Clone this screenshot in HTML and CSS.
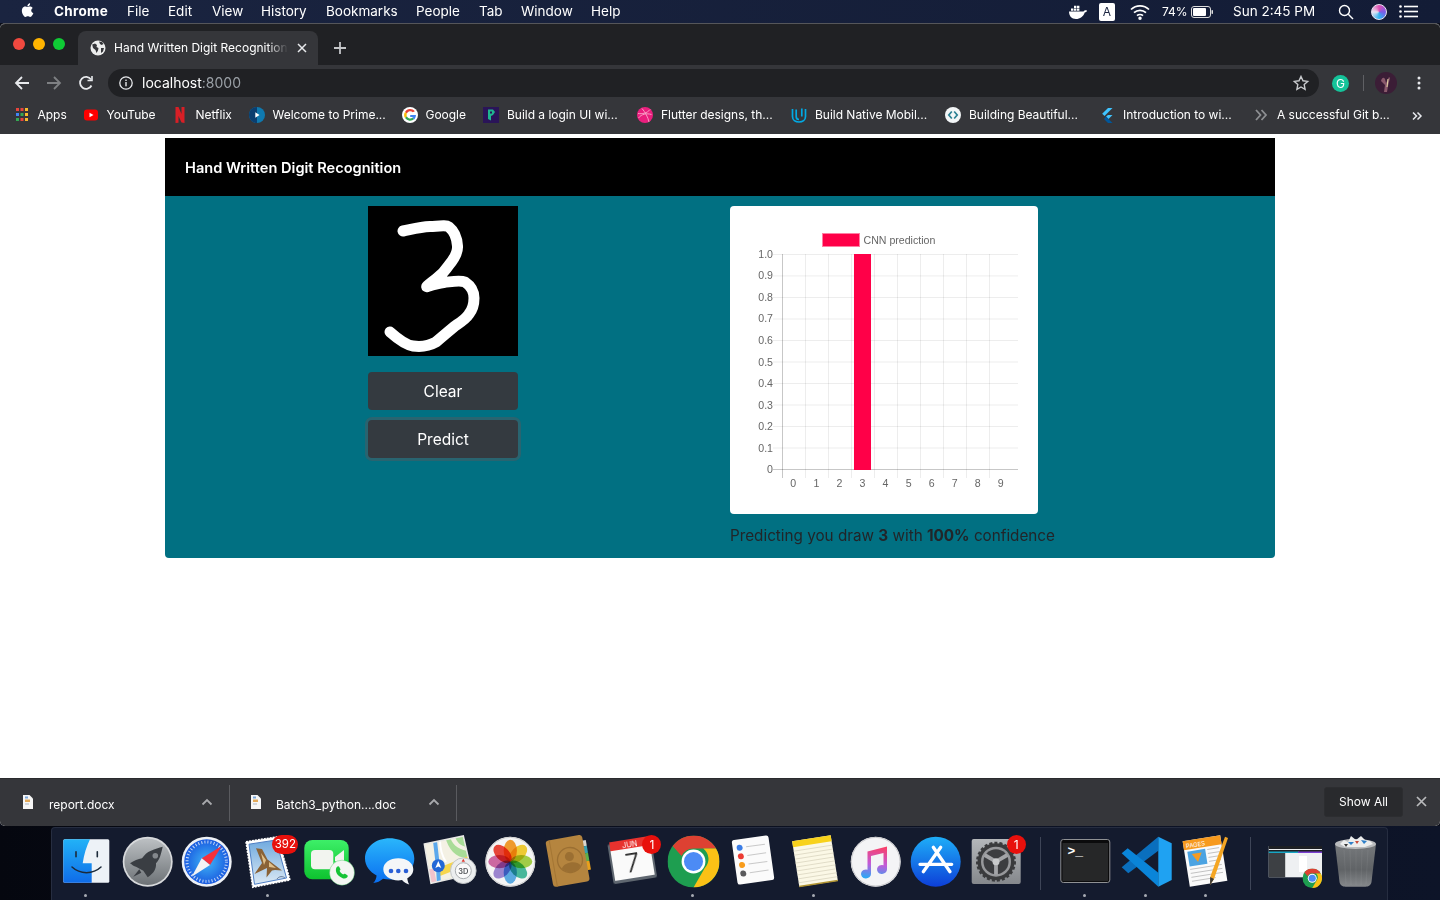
FILE: index.html
```html
<!DOCTYPE html>
<html lang="en">

<head>
    <meta charset="UTF-8">
    <title>Hand Written Digit Recognition</title>
    <link rel="stylesheet" href="styles.css">
</head>

<body>
    <svg class="defs" width="0" height="0">
        <defs>
            <symbol id="chrome" viewBox="0 0 48 48">
                <circle cx="24" cy="24" r="24" fill="#1e9e50"/>
                <path d="M24 0a24 24 0 0 1 20.800 12H24a12 12 0 0 0-11 7L4.700 9.700A24 24 0 0 1 24 0z" fill="#dd4132"/>
                <path d="M44.800 12A24 24 0 0 1 24 48l10.400-18A12 12 0 0 0 33 12z" fill="#fbc116"/>
                <circle cx="24" cy="24" r="11" fill="#fff"/>
                <circle cx="24" cy="24" r="8.800" fill="#4c8bf5"/>
            </symbol>
            <symbol id="doc" viewBox="0 0 11 14">
                <path d="M1 0h6.500L11 3.500V14H1z" fill="#f6f6f6"/>
                <rect x="3" y="1.500" width="3" height="2" fill="#7aa6d8"/>
                <rect x="3" y="4.500" width="5" height="2.500" fill="#e2a95a"/>
                <rect x="3" y="8.500" width="4" height="1" fill="#a9b4c4"/>
            </symbol>
            <symbol id="chevron" viewBox="0 0 12 8">
                <path d="M1.500 6.500 6 2l4.500 4.500" fill="none" stroke="#a8a9ac" stroke-width="1.800"/>
            </symbol>
        </defs>
    </svg>

    <!-- menu bar -->
    <header class="menubar">
        <nav class="menu-left">
            <svg class="apple" width="15" height="17" viewBox="0 0 15 17"><path fill="#fff" d="M11.200 8.500c0-1.700 1.400-2.500 1.500-2.600-.8-1.200-2.100-1.400-2.500-1.400-1.100-.1-2.100.6-2.600.6-.6 0-1.400-.6-2.300-.6-1.200 0-2.300.7-2.900 1.700-1.200 2.100-.3 5.300.9 7 .6.8 1.300 1.800 2.200 1.700.9 0 1.200-.6 2.300-.6s1.400.6 2.300.6c1 0 1.600-.9 2.200-1.700.7-1 1-1.900 1-2-.1 0-2-.8-2.100-2.700zM9.400 3.400c.5-.6.8-1.400.7-2.200-.7 0-1.500.5-2 1.100-.4.500-.8 1.300-.7 2.100.8 0 1.500-.4 2-1z"/></svg>
            <b>Chrome</b>
            <span>File</span>
            <span>Edit</span>
            <span>View</span>
            <span>History</span>
            <span>Bookmarks</span>
            <span>People</span>
            <span>Tab</span>
            <span>Window</span>
            <span>Help</span>
        </nav>
        <div class="menu-right">
            <svg width="20" height="16" viewBox="0 0 20 16"><path fill="#fff" d="M1 7.500h14.500c.8-1.200 2.500-1.500 3.500-.8-.4 1-1.200 1.700-2.300 1.800C15.500 12.500 12 15 8 15 3.500 15 1 12 1 7.500z"/><path fill="#fff" d="M3 4.500h2.400v2.300H3zm3 0h2.400v2.300H6zm3 0h2.400v2.300H9zM6 1.700h2.400V4H6zm3 0h2.400V4H9z"/></svg>
            <span class="input-badge">A</span>
            <svg width="20" height="16" viewBox="0 0 20 16" fill="none" stroke="#fff" stroke-width="1.700"><path d="M1 5.500a13 13 0 0 1 18 0"/><path d="M4 8.700a8.700 8.700 0 0 1 12 0"/><path d="M7 11.700a4.400 4.400 0 0 1 6 0"/><circle cx="10" cy="14.300" r=".9" fill="#fff"/></svg>
            <span class="small">74%</span>
            <svg width="23" height="12" viewBox="0 0 23 12"><rect x=".5" y=".5" width="19" height="11" rx="2.500" fill="none" stroke="#ddd"/><rect x="2" y="2" width="13" height="8" rx="1" fill="#fff"/><rect x="20.500" y="4" width="1.500" height="4" rx=".7" fill="#ddd"/></svg>
            <span>Sun 2:45 PM</span>
            <svg width="16" height="16" viewBox="0 0 16 16" fill="none" stroke="#fff" stroke-width="1.400"><circle cx="6.500" cy="6.500" r="5"/><path d="m10.300 10.300 4.700 4.700"/></svg>
            <span class="siri"></span>
            <svg width="19" height="13" viewBox="0 0 19 13" fill="#fff"><circle cx="1.500" cy="1.500" r="1.300"/><circle cx="1.500" cy="6.500" r="1.300"/><circle cx="1.500" cy="11.500" r="1.300"/><rect x="5" y=".7" width="14" height="1.600"/><rect x="5" y="5.700" width="14" height="1.600"/><rect x="5" y="10.700" width="14" height="1.600"/></svg>
        </div>
    </header>

    <div class="window">
        <!-- tab strip -->
        <div class="tabstrip">
            <div class="lights">
                <i class="light red"></i>
                <i class="light yellow"></i>
                <i class="light green"></i>
            </div>
            <div class="tab">
                <svg width="16" height="16" viewBox="0 0 16 16"><circle cx="8" cy="8" r="7.500" fill="#eceded"/><path fill="#35363a" d="M2.200 4.500 5 3.500l2 1.500-.5 2L8.500 8 8 10.500 6.500 13 5.500 10 3 8zM9 1.500l3 .5 1.500 2-2 1-1.500-1zM11 8h3l-1 3.500-2 1.500z"/></svg>
                <span class="tab-title">Hand Written Digit Recognition</span>
                <svg width="10" height="10" viewBox="0 0 10 10" stroke="#e8eaed" stroke-width="1.500"><path d="m1 1 8 8M9 1 1 9"/></svg>
            </div>
            <svg class="newtab" width="14" height="14" viewBox="0 0 14 14" stroke="#c4c6c9" stroke-width="1.800"><path d="M7 1v12M1 7h12"/></svg>
        </div>

        <!-- toolbar -->
        <div class="toolbar">
            <svg width="16" height="16" viewBox="0 0 16 16" fill="none" stroke="#e8eaed" stroke-width="1.800"><path d="M15 8H2M8 2 2 8l6 6"/></svg>
            <svg width="16" height="16" viewBox="0 0 16 16" fill="none" stroke="#7e8083" stroke-width="1.800"><path d="M1 8h13M8 2l6 6-6 6"/></svg>
            <svg width="16" height="16" viewBox="0 0 16 16" fill="none" stroke="#e8eaed" stroke-width="1.800"><path d="M13.500 10.500A6 6 0 1 1 13 4.500"/><path d="M14 1v4.500H9.500" stroke-width="1.600"/></svg>
            <div class="omnibox">
                <svg width="14" height="14" viewBox="0 0 14 14"><circle cx="7" cy="7" r="6.200" fill="none" stroke="#e8eaed" stroke-width="1.300"/><rect x="6.300" y="6" width="1.400" height="4.300" fill="#e8eaed"/><rect x="6.300" y="3.600" width="1.400" height="1.400" fill="#e8eaed"/></svg>
                <span class="url">localhost<em>:8000</em></span>
                <svg class="star" width="16" height="16" viewBox="0 0 16 16"><path d="m8 1.500 2 4.300 4.700.6-3.500 3.200.9 4.700L8 12l-4.100 2.300.9-4.700L1.300 6.400 6 5.800z" fill="none" stroke="#c9cbce" stroke-width="1.400"/></svg>
            </div>
            <span class="grammarly">G</span>
            <i class="tool-sep"></i>
            <svg class="avatar" width="22" height="22" viewBox="0 0 22 22"><circle cx="11" cy="11" r="11" fill="#3b1d36"/><path d="M6 9c1-4 3-4 4-2l1 4 3-6 1 1-2 8-1 6H9l1-7z" fill="#8a5a6c"/><path d="m13 7-1 8" stroke="#e6d9a8" stroke-width="1"/></svg>
            <svg class="kebab" width="4" height="14" viewBox="0 0 4 14" fill="#e8eaed"><circle cx="2" cy="2" r="1.500"/><circle cx="2" cy="7" r="1.500"/><circle cx="2" cy="12" r="1.500"/></svg>
        </div>

        <!-- bookmarks -->
        <div class="bookmarks">
            <div class="bm">
                <svg width="16" height="16" viewBox="0 0 16 16"><rect x="2" y="1" width="3" height="3" fill="#e8453c"/><rect x="6.500" y="1" width="3" height="3" fill="#e8453c"/><rect x="11" y="1" width="3" height="3" fill="#f9bb2d"/><rect x="2" y="6" width="3" height="3" fill="#4285f4"/><rect x="6.500" y="6" width="3" height="3" fill="#34a853"/><rect x="11" y="6" width="3" height="3" fill="#f9bb2d"/><rect x="2" y="11" width="3" height="3" fill="#34a853"/><rect x="6.500" y="11" width="3" height="3" fill="#e8453c"/><rect x="11" y="11" width="3" height="3" fill="#f9bb2d"/></svg>
                <span>Apps</span>
            </div>
            <div class="bm">
                <svg width="16" height="16" viewBox="0 0 16 16"><rect x="1" y="2.500" width="14" height="11" rx="3" fill="#f00"/><path d="M6.500 5.700v4.600L10.500 8z" fill="#fff"/></svg>
                <span>YouTube</span>
            </div>
            <div class="bm">
                <svg width="16" height="16" viewBox="0 0 16 16"><path d="M3.500 0h3l3 7V0h3v16l-3-.5-3-6.500v6.800l-3 .2z" fill="#d81f26"/></svg>
                <span>Netflix</span>
            </div>
            <div class="bm">
                <svg width="16" height="16" viewBox="0 0 16 16"><circle cx="8" cy="8" r="8" fill="#0f79af"/><path d="M0 8a8 8 0 0 1 8-8v16a8 8 0 0 1-8-8z" fill="#0b3e6f"/><path d="M6.300 5.300v5.400L10.500 8z" fill="#fff"/></svg>
                <span>Welcome to Prime...</span>
            </div>
            <div class="bm">
                <svg width="16" height="16" viewBox="0 0 16 16"><circle cx="8" cy="8" r="8" fill="#fff"/><path d="M12.900 4.300A6 6 0 0 0 3 4.900l1.900 1.500a3.700 3.700 0 0 1 5.900-1.200z" fill="#ea4335"/><path d="M3 4.900a6 6 0 0 0 0 6.200l1.900-1.500a3.700 3.700 0 0 1 0-3.200z" fill="#fbbc05"/><path d="M3 11.100a6 6 0 0 0 9.300.9l-1.800-1.400a3.700 3.700 0 0 1-5.600-1z" fill="#34a853"/><path d="M14 8h-5.800v2h3.200a3 3 0 0 1-.9 1l1.800 1.400A6 6 0 0 0 14 8z" fill="#4285f4"/></svg>
                <span>Google</span>
            </div>
            <div class="bm">
                <svg width="16" height="16" viewBox="0 0 16 16"><rect width="16" height="16" fill="#2a1458"/><path d="M5 2.500h5l2 2.500-2 3-2 1v4.500l-3-1.500z" fill="#1fb58f"/><path d="M7 4.500h2v2H7z" fill="#2a1458"/></svg>
                <span>Build a login UI wi...</span>
            </div>
            <div class="bm">
                <svg width="16" height="16" viewBox="0 0 16 16"><circle cx="8" cy="8" r="8" fill="#ea1f7e"/><path d="M5 1.500C8 5 11 10 12 15M1 6.500c4 .5 9 0 12-4M1.500 11c3-4 8-5 13-3.500" fill="none" stroke="#f9a9cc" stroke-width=".9"/></svg>
                <span>Flutter designs, th...</span>
            </div>
            <div class="bm">
                <svg width="16" height="16" viewBox="0 0 16 16" fill="none" stroke="#02a9e3" stroke-width="1.700"><path d="M1.500 2v7.500c0 3.500 3 5.500 6.500 5.500s6.500-2 6.500-5.500V2"/><path d="M5.200 2.500v7c0 2 1.200 3 2.800 3m2.800-11v8"/></svg>
                <span>Build Native Mobil...</span>
            </div>
            <div class="bm">
                <svg width="16" height="16" viewBox="0 0 16 16"><circle cx="8" cy="8" r="8" fill="#f3f6f7"/><path d="M6.800 4.500 3.800 8l3 3.500" fill="none" stroke="#2a7f92" stroke-width="1.700"/><path d="M9.200 4.500l3 3.500-3 3.500" fill="none" stroke="#2a7f92" stroke-width="1.700"/></svg>
                <span>Building Beautiful...</span>
            </div>
            <div class="bm">
                <svg width="16" height="16" viewBox="0 0 16 16"><path d="M9 1h4.500L5.500 9 3.200 6.800z" fill="#40c4ff"/><path d="M9 8h4.500l-4 4L7 9.500z" fill="#40c4ff"/><path d="m7 9.500 2.500 2.500L13.500 16H9l-4-4z" fill="#01579b"/></svg>
                <span>Introduction to wi...</span>
            </div>
            <div class="bm">
                <svg width="16" height="16" viewBox="0 0 16 16" fill="none" stroke="#8d8f92" stroke-width="1.800"><path d="m3 3 4.500 5L3 13M8.500 3 13 8l-4.500 5"/></svg>
                <span>A successful Git b...</span>
            </div>
            <svg class="bm-more" width="10" height="10" viewBox="0 0 10 10" fill="none" stroke="#e8eaed" stroke-width="1.500"><path d="m1 1.500 3.500 3.500L1 8.500M5.500 1.500 9 5 5.500 8.500"/></svg>
        </div>

        <!-- page -->
        <main class="page">
            <div class="container">
                <div class="navbar">Hand Written Digit Recognition</div>
                <section class="panel">
                    <div class="draw-col">
                        <svg class="digit-canvas" width="150" height="150" viewBox="0 0 150 150">
                            <path d="M35 25C45 23 52 21 62 20.500S78 19 81 21C86 25 89 32 89.500 40C90 47 86 53 81 59C77 65 72 70 68 73C64 76 60 79 58.700 80.700C64 79 70 77 76 76.500C85 75.500 92 74 97 76C103 80 106 86 106 92C106 98 105 103 101 108C98 113 93 116 87 120C81 125 75 130 68 136C61 140 52 141 45 140C38 139 31 134 22 126" fill="none" stroke="#fff" stroke-width="11" stroke-linecap="round" stroke-linejoin="round"/>
                        </svg>
                        <button class="btn">Clear</button>
                        <button class="btn btn-focus">Predict</button>
                    </div>
                    <div class="chart-col">
                        <div class="chart-card">
                            <svg width="308" height="308" viewBox="0 0 308 308" class="chart">
                                <g stroke="#000" stroke-opacity=".07" stroke-width="1">
                                    <path d="M43 48.500H288M43 69.900H288M43 91.500H288M43 113H288M43 134.500H288M43 156H288M43 177.500H288M43 199H288M43 220.500H288M43 242H288"/>
                                    <path d="M75.500 48V272M98.500 48V272M121.500 48V272M144.500 48V272M167.500 48V272M190.500 48V272M213.500 48V272M236.500 48V272M259.500 48V272"/>
                                </g>
                                <path d="M43 263.500H288M52.500 48V272" stroke="#000" stroke-opacity=".22" fill="none"/>
                                <rect x="124" y="48" width="17" height="216" fill="#ff0048"/>
                                <rect x="92.500" y="27.500" width="37" height="13" fill="#ff0048" stroke="#ff7fa3"/>
                                <text x="133.500" y="37.500">CNN prediction</text>
                                <g text-anchor="end">
                                    <text x="43" y="51.500">1.0</text>
                                    <text x="43" y="73">0.9</text>
                                    <text x="43" y="95">0.8</text>
                                    <text x="43" y="116">0.7</text>
                                    <text x="43" y="137.500">0.6</text>
                                    <text x="43" y="159.500">0.5</text>
                                    <text x="43" y="181">0.4</text>
                                    <text x="43" y="202.500">0.3</text>
                                    <text x="43" y="224">0.2</text>
                                    <text x="43" y="245.500">0.1</text>
                                    <text x="43" y="267">0</text>
                                </g>
                                <g text-anchor="middle">
                                    <text x="63.300" y="280.500">0</text>
                                    <text x="86.400" y="280.500">1</text>
                                    <text x="109.400" y="280.500">2</text>
                                    <text x="132.500" y="280.500">3</text>
                                    <text x="155.500" y="280.500">4</text>
                                    <text x="178.600" y="280.500">5</text>
                                    <text x="201.700" y="280.500">6</text>
                                    <text x="224.700" y="280.500">7</text>
                                    <text x="247.800" y="280.500">8</text>
                                    <text x="270.800" y="280.500">9</text>
                                </g>
                            </svg>
                        </div>
                        <p class="result">Predicting you draw <b>3</b> with <b>100%</b> confidence</p>
                    </div>
                </section>
            </div>
        </main>

        <!-- downloads -->
        <footer class="downloads">
            <div class="dl dl-first">
                <svg width="11" height="14"><use href="#doc"/></svg>
                <span>report.docx</span>
                <svg class="dl-chevron" width="12" height="8"><use href="#chevron"/></svg>
            </div>
            <div class="dl dl-second">
                <svg width="11" height="14"><use href="#doc"/></svg>
                <span>Batch3_python....doc</span>
                <svg class="dl-chevron" width="12" height="8"><use href="#chevron"/></svg>
            </div>
            <button class="show-all">Show All</button>
            <svg class="dl-close" width="11" height="11" viewBox="0 0 11 11" stroke="#b9babc" stroke-width="1.700"><path d="m1 1 9 9M10 1l-9 9"/></svg>
        </footer>
    </div>

    <!-- dock -->
    <div class="desktop">
        <div class="dock">
            <!-- finder -->
            <div class="dock-item running">
                <svg width="54" height="54" viewBox="0 0 54 54"><defs><linearGradient id="fa" x1="0" y1="0" x2="0" y2="1"><stop offset="0" stop-color="#22b2f7"/><stop offset="1" stop-color="#0f6ce8"/></linearGradient></defs><rect x="4.300" y="3.300" width="46" height="43.400" rx="1.500" fill="#edf2f7"/><path d="M5.800 3.300H31c-3.500 7-6 15-7.300 24h9V46.700H5.800a1.500 1.500 0 0 1-1.500-1.500V4.800a1.500 1.500 0 0 1 1.500-1.500z" fill="url(#fa)"/><path d="M17 15.700v5M38.300 15.700v5" stroke="#1c2a3a" stroke-width="1.600" stroke-linecap="round"/><path d="M13 31c8 7.500 21 7.500 29 0" fill="none" stroke="#1c2a3a" stroke-width="1.500" stroke-linecap="round"/></svg>
            </div>
            <!-- launchpad -->
            <div class="dock-item">
                <svg width="54" height="54" viewBox="0 0 54 54"><defs><linearGradient id="la" x1="0" y1="0" x2="0" y2="1"><stop offset="0" stop-color="#bcc0c3"/><stop offset="1" stop-color="#6d7276"/></linearGradient></defs><circle cx="27.700" cy="25.700" r="25" fill="#d7d9db"/><circle cx="27.700" cy="25.700" r="23.300" fill="url(#la)"/><path d="M42.700 10.700C41 18 40 23 36 27.300c.5 5-2 10-8.300 14l-4.400-6.600L16 30.700c-2-.2-4-2-6-3.400 4-2.500 8-4.500 12-5 2.500-3.500 5-6 9-7.600 4-1.700 8-3.300 11.700-4z" fill="#3a3e43"/><circle cx="35.300" cy="19.700" r="2.800" fill="#84888c"/><path d="M19.300 33.300 13.300 40.700l8-4z" fill="#3a3e43"/></svg>
            </div>
            <!-- safari -->
            <div class="dock-item">
                <svg width="54" height="54" viewBox="0 0 54 54"><defs><radialGradient id="sa"><stop offset="0" stop-color="#3fb5f6"/><stop offset="1" stop-color="#1a5be0"/></radialGradient></defs><circle cx="26.700" cy="25.700" r="25" fill="#eef1f5"/><circle cx="26.700" cy="25.700" r="22.500" fill="url(#sa)"/><circle cx="26.700" cy="25.700" r="19.700" fill="none" stroke="#fff" stroke-opacity=".75" stroke-width="3" stroke-dasharray="1 2.100"/><path d="M41.700 10 21.700 22.300 30 29z" fill="#f5303c"/><path d="M11.700 40.700 30 29l-8.300-6.700z" fill="#f4f4f4"/></svg>
            </div>
            <!-- mail -->
            <div class="dock-item running">
                <svg width="54" height="54" viewBox="0 0 54 54"><defs><linearGradient id="ml" x1="0" y1="0" x2="0" y2="1"><stop offset="0" stop-color="#6fa9de"/><stop offset="1" stop-color="#dbe9f5"/></linearGradient></defs><path d="M5 5.700 36.700.7 49 44 11.700 51.300z" fill="#fff" stroke="#fff" stroke-width="1.500" stroke-dasharray="2 1"/><path d="M8 8.200 35 4 45.500 42 13.500 48.300z" fill="url(#ml)" stroke="#4f7fc4" stroke-width="1"/><path d="M15 12.300 21 13l5.500 10.500L41 34.500l-7-.5-3 .5-5.500 7 .5-9.500-12.500 6L21 27z" fill="#8a6236"/><path d="M20 17l5 7-2 5zM28 26l7 6-7-1z" fill="#e0c08a"/><path d="M36 43c2-3 6-3 8-1" fill="none" stroke="#6b7f9e" stroke-width="1"/></svg>
                <span class="badge badge-wide">392</span>
            </div>
            <!-- facetime -->
            <div class="dock-item">
                <svg width="54" height="54" viewBox="0 0 54 54"><defs><linearGradient id="fc" x1="0" y1="0" x2="0" y2="1"><stop offset="0" stop-color="#3def68"/><stop offset="1" stop-color="#0ec32f"/></linearGradient></defs><rect x="2.300" y="4" width="44.400" height="39.300" rx="8" fill="url(#fc)"/><rect x="9" y="14" width="22.300" height="19.300" rx="4" fill="#f2f4ef"/><path d="M33 21l9-7v18l-9-7z" fill="#f2f4ef"/><circle cx="40" cy="36.700" r="12.500" fill="#f4f6f3" stroke="#0db52f" stroke-opacity=".3"/><path d="M34.800 31c1-1 2-1 2.500 0l1 2c.3.700 0 1.200-.7 1.800.7 1.700 2 3 3.600 3.700.6-.7 1.200-1 1.800-.7l2 1.200c1 .5 1 1.500 0 2.500-2 2-5 1-8-1.500s-4-6.500-2.200-9z" fill="#16c436"/></svg>
            </div>
            <!-- messages -->
            <div class="dock-item">
                <svg width="54" height="54" viewBox="0 0 54 54"><defs><linearGradient id="ms" x1="0" y1="0" x2="0" y2="1"><stop offset="0" stop-color="#2ab6fb"/><stop offset="1" stop-color="#0a6ef0"/></linearGradient></defs><path d="M27.700 2.300C41.500 2.300 52.300 11 52.300 22.500S41.500 43.500 27.700 43.500c-2.500 0-4.700-.3-6.700-.8-2.500 2.300-6 4-9.700 4.300 1.800-2 3-4.500 3.300-7.500C8 36 3 30 3 22.500 3 11 14 2.300 27.700 2.300z" fill="url(#ms)"/><path d="M36.300 22.300c8.300 0 15 4.600 15 11 0 4.300-2.500 7-6 9 .2 2 .6 4 2 6.300-3-.8-5.500-2.300-7.300-4.500-1.200.3-2.400.4-3.700.4-8.300 0-15-4.800-15-11.200s6.700-11 15-11z" fill="#f4f6f8"/><circle cx="29" cy="35" r="2.300" fill="#2a5fd6"/><circle cx="36.300" cy="35" r="2.300" fill="#2a5fd6"/><circle cx="44" cy="35" r="2.300" fill="#2a5fd6"/></svg>
            </div>
            <!-- maps -->
            <div class="dock-item">
                <svg width="54" height="54" viewBox="0 0 54 54"><defs><clipPath id="mp"><path d="M1.300 8 40.300 0 49 38 8 47.300z"/></clipPath></defs><path d="M1.300 8 40.300 0 49 38 8 47.300z" fill="#f4f1e4"/><g clip-path="url(#mp)"><path d="M22 0h22v22C33 22 25 13 22 0z" fill="#a9dc98"/><path d="M27 0c1 7 7 13 17 15v-4c-6-1-11-5-12-11z" fill="#f4f1e4"/><path d="M1 33h10l3 16H6z" fill="#f2c3cc"/><path d="M17 40 50 27v-9L15 32z" fill="#f7d64c"/><path d="M12 5l3 26 1 18" stroke="#5aa8ec" stroke-width="4" fill="none"/><path d="M17 4c0 8 2 16 6 22" stroke="#fff" stroke-width="2" fill="none"/></g><path d="M1.300 8 40.300 0 49 38 8 47.300z" fill="none" stroke="#e9e9e6" stroke-width="1.500"/><circle cx="15.300" cy="29.700" r="6.500" fill="#2468d6"/><path d="m15.300 25 3 7-3-1.500-3 1.500z" fill="#fff"/><circle cx="40.300" cy="34.700" r="12.800" fill="#eceeef" stroke="#c3c6c8"/><circle cx="40.300" cy="34.700" r="8" fill="#fafafa" stroke="#a8acaf"/><path d="m40.300 22.800 1.700 3h-3.400z" fill="#e03a30"/><text class="maps-3d" x="40.300" y="37.500" text-anchor="middle">3D</text></svg>
            </div>
            <!-- photos -->
            <div class="dock-item">
                <svg width="54" height="54" viewBox="0 0 54 54"><circle cx="26.300" cy="25.700" r="25" fill="#f5f5f5"/><circle cx="26.300" cy="25.700" r="24.300" fill="none" stroke="#cfcfcf"/><g class="petals" transform="translate(26.300 25.700)"><ellipse cy="-11" rx="6.600" ry="11" fill="#f9a02e"/><ellipse cy="-11" rx="6.600" ry="11" fill="#f7d136" transform="rotate(45)"/><ellipse cy="-11" rx="6.600" ry="11" fill="#a8d54a" transform="rotate(90)"/><ellipse cy="-11" rx="6.600" ry="11" fill="#4bbfa0" transform="rotate(135)"/><ellipse cy="-11" rx="6.600" ry="11" fill="#5fb0ea" transform="rotate(180)"/><ellipse cy="-11" rx="6.600" ry="11" fill="#a28ad8" transform="rotate(225)"/><ellipse cy="-11" rx="6.600" ry="11" fill="#d56ca8" transform="rotate(270)"/><ellipse cy="-11" rx="6.600" ry="11" fill="#f0483a" transform="rotate(315)"/></g></svg>
            </div>
            <!-- contacts -->
            <div class="dock-item">
                <svg width="54" height="54" viewBox="0 0 54 54"><g transform="rotate(-10 26 24)"><rect x="41" y="7" width="4" height="6" fill="#d8d6cf"/><rect x="41" y="13" width="4" height="7" fill="#38a0b0"/><rect x="41" y="20" width="4" height="8" fill="#5fb04a"/><rect x="41" y="28" width="4" height="9" fill="#e8a01c"/><rect x="5" y="1" width="37" height="47" rx="3" fill="#b5853f"/><path d="M9 1v47" stroke="#a47634"/><circle cx="26" cy="24" r="12.500" fill="none" stroke="#9b6f32" stroke-width="1.300"/><circle cx="26" cy="20.500" r="4.500" fill="#9b6f32"/><path d="M16.500 31c3-6 16-6 19 0-4 7-15 7-19 0z" fill="#9b6f32"/></g></svg>
            </div>
            <!-- calendar -->
            <div class="dock-item">
                <svg width="54" height="54" viewBox="0 0 54 54"><g transform="rotate(-9 27 23)"><rect x="5" y="5" width="44" height="40" rx="2" fill="#5f6770"/><rect x="7" y="3" width="40" height="39" fill="#fafafa"/><rect x="7" y="3" width="40" height="9" fill="#e8322e"/><text class="cal-month" x="27" y="10.800" text-anchor="middle">JUN</text><text class="cal-day" x="27" y="36" text-anchor="middle">7</text></g></svg>
                <span class="badge">1</span>
            </div>
            <!-- chrome -->
            <div class="dock-item running">
                <svg width="54" height="54"><use href="#chrome" x="1.500" y="-.5" width="52" height="52"/></svg>
            </div>
            <!-- reminders -->
            <div class="dock-item">
                <svg width="54" height="54" viewBox="0 0 54 54"><g transform="rotate(-8 27 24)"><rect x="8.500" y="1.500" width="37" height="45" rx="2.500" fill="#fbfbfb"/><circle cx="15.500" cy="10" r="3" fill="#3b7de6"/><circle cx="15.500" cy="18.700" r="3" fill="#ec3b33"/><circle cx="15.500" cy="27.400" r="3" fill="#f89c1c"/><circle cx="15.500" cy="36.100" r="3" fill="#5a5a5c"/><path d="M22 10h19M22 18.700h19M22 27.400h19M22 36.100h19" stroke="#c9c9c9" stroke-width="1"/></g></svg>
            </div>
            <!-- notes -->
            <div class="dock-item running">
                <svg width="54" height="54" viewBox="0 0 54 54"><g transform="rotate(-9 28 25)"><rect x="8.500" y="2" width="39" height="46" fill="#fbf8e6"/><rect x="8.500" y="2" width="39" height="6" fill="#f8d21c"/><path d="M8.500 12h39M8.500 16h39M8.500 20h39M8.500 24h39M8.500 28h39M8.500 32h39M8.500 36h39M8.500 40h39M8.500 44h39" stroke="#dcd7c2" stroke-width=".8"/><rect x="8.500" y="47" width="39" height="1.500" fill="#b09330"/></g></svg>
            </div>
            <!-- music -->
            <div class="dock-item">
                <svg width="54" height="54" viewBox="0 0 54 54"><defs><linearGradient id="mu" x1=".6" y1="0" x2=".5" y2="1"><stop offset="0" stop-color="#f9406a"/><stop offset=".55" stop-color="#c25ad8"/><stop offset="1" stop-color="#2ea7f5"/></linearGradient></defs><circle cx="27.700" cy="25.700" r="25" fill="#f4f4f6"/><circle cx="27.700" cy="25.700" r="24.300" fill="none" stroke="#c9c9cc"/><path d="M19.500 15.500 39 10.500v23a5 4.500 0 1 1-3.500-4.300V17l-12.500 3v18a5 4.500 0 1 1-3.500-4.300z" fill="url(#mu)"/></svg>
            </div>
            <!-- app store -->
            <div class="dock-item">
                <svg width="54" height="54" viewBox="0 0 54 54"><defs><linearGradient id="as" x1="0" y1="0" x2="0" y2="1"><stop offset="0" stop-color="#1eaef8"/><stop offset="1" stop-color="#0d3fd8"/></linearGradient></defs><circle cx="26.700" cy="25.700" r="25" fill="url(#as)"/><path d="M24.300 11.300 41 35.700M31.700 11.300 14.300 35.700M11 28.300h31.700" fill="none" stroke="#fff" stroke-width="3.300" stroke-linecap="round"/></svg>
            </div>
            <!-- system preferences -->
            <div class="dock-item">
                <svg width="54" height="54" viewBox="0 0 54 54"><defs><linearGradient id="sp" x1="0" y1="0" x2="0" y2="1"><stop offset="0" stop-color="#b4b7ba"/><stop offset="1" stop-color="#85888c"/></linearGradient></defs><rect x="2.700" y="3" width="49" height="45" rx="2" fill="url(#sp)"/><circle cx="27" cy="25.700" r="18.500" fill="#3a3b3d" stroke="#3a3b3d" stroke-width="3" stroke-dasharray="3 2"/><circle cx="27" cy="25.700" r="15" fill="#97989b"/><circle cx="27" cy="25.700" r="12.500" fill="#3c3d40"/><path d="M27 25.700v13M27 25.700 15.700 19M27 25.700 38.300 19" stroke="#a3a4a7" stroke-width="3.800"/><circle cx="27" cy="25.700" r="3.500" fill="#c9cacc"/></svg>
                <span class="badge">1</span>
            </div>
            <div class="dock-sep"></div>
            <!-- terminal -->
            <div class="dock-item running">
                <svg width="54" height="54" viewBox="0 0 54 54"><rect x="2.800" y="3.500" width="49" height="43" rx="2.500" fill="#0b0b0c" stroke="#8f9194"/><rect x="4.500" y="7" width="45.500" height="38" fill="#262728"/><text class="term" x="9.500" y="18.500">&gt;_</text></svg>
            </div>
            <!-- vs code -->
            <div class="dock-item running">
                <svg width="54" height="54" viewBox="0 0 54 54"><path d="M39.300.7 39.300 14.700 9.300 37.300 2.700 31.300z" fill="#0a6fbe"/><path d="M2.700 17.300 8.700 12.300 39.300 36.700V50.700z" fill="#0a85d9"/><path d="M39.300.7 52.700 7.300V44L39.300 50.700z" fill="#1fa2f2"/></svg>
            </div>
            <!-- pages -->
            <div class="dock-item running">
                <svg width="54" height="54" viewBox="0 0 54 54"><g transform="rotate(-9 26 25)"><rect x="7" y="2" width="38" height="46" fill="#fafafa"/><rect x="7" y="2" width="38" height="9" fill="#f79a1e"/><text class="pages-label" x="9.500" y="9.500">PAGES</text><rect x="10" y="13" width="18" height="15" fill="#4ba3e2"/><path d="M14 16h10l-5 9z" fill="#f59b23"/><path d="M30 14h12M30 18h12M30 22h12M30 26h12M10 31h32M10 35h32M10 39h32M10 43h24" stroke="#b9b9b9" stroke-width=".8"/></g><path d="M46 .7 49 2 35 43l-4 6 .2-8z" fill="#f5a623"/><path d="M35 43l-4 6 .2-8z" fill="#3a3a3a"/></svg>
            </div>
            <div class="dock-sep"></div>
            <!-- screenshot window -->
            <div class="dock-item">
                <svg width="54" height="54" viewBox="0 0 54 54"><rect x=".7" y="10" width="53.300" height="31.300" fill="#eef0f2"/><rect x=".7" y="10" width="53.300" height="3" fill="#1d1f23"/><rect x=".7" y="14" width="53.300" height="3" fill="#1d1f23"/><rect x=".7" y="15.500" width="30" height="1.500" fill="#18a5c4"/><rect x="30" y="15.500" width="24" height="1.500" fill="#7a3fd0"/><rect x=".7" y="17" width="16.500" height="24.300" fill="#3d4044"/><rect x="31" y="20" width="8" height="16" fill="#fff"/><svg x="34.500" y="32.500" width="19.500" height="19.500"><use href="#chrome" width="19.500" height="19.500"/></svg></svg>
            </div>
            <!-- trash -->
            <div class="dock-item">
                <svg width="54" height="54" viewBox="0 0 54 54"><defs><linearGradient id="tr" x1="0" y1="0" x2="0" y2="1"><stop offset="0" stop-color="#76797c"/><stop offset=".6" stop-color="#606366"/><stop offset="1" stop-color="#85888b"/></linearGradient></defs><path d="M6 8h41l-4.500 38c-.4 3-3 4.700-6 4.700h-20c-3 0-5.600-1.700-6-4.700z" fill="url(#tr)"/><path d="M15 14l2 34M21 14l1 35M27 14v35M33 14l-1 35M39 14l-2 34" stroke="#fff" stroke-opacity=".06"/><ellipse cx="26.500" cy="8" rx="20.500" ry="5" fill="#b9bbbd"/><path d="M11 8l4-4 4 2 3-6 5 4 5-4 4 4 5 1 3 3-8 3H16z" fill="#eceded"/><path d="M19 6l3 3 3-3zM32 4l3 4 3-3z" fill="#2f7fc8"/><path d="M26 5l2 3 2-3z" fill="#c84a3a"/><path d="M15 8l2 3 2-3z" fill="#3a3a3a"/></svg>
            </div>
        </div>
    </div>
</body>

</html>
```

FILE: styles.css
```css
* {
    box-sizing: border-box;
}

html,
body {
    margin: 0;
    height: 900px;
    overflow: hidden;
}

body {
    display: flex;
    flex-direction: column;
    background: #0a0d18;
    font-family: Inter, "Liberation Sans", sans-serif;
}

.defs {
    position: absolute;
}

svg {
    display: block;
    flex: none;
    overflow: visible;
}

/* menu bar */
.menubar {
    display: flex;
    justify-content: space-between;
    height: 23px;
    padding: 0 20px;
    background: linear-gradient(90deg, #1a2440, #131c36);
    color: #fff;
    font-size: 13.5px;
    line-height: 23px;
}

.menu-left {
    display: grid;
    grid-template-columns: 34px 73px 41px 44px 49px 65px 90px 63px 42px 70px 40px;
    align-items: center;
}

.menu-left b {
    font-weight: 700;
    letter-spacing: .3px;
}

.apple {
    margin-top: -3px;
}

.menu-right {
    display: grid;
    grid-template-columns: 31px 31px 32px 29px 42px 105px 33px 28px 21px;
    align-items: center;
}

.menu-right .small {
    font-size: 12px;
}

.input-badge {
    width: 16px;
    height: 18px;
    border-radius: 2px;
    background: #fff;
    color: #1a2440;
    font-size: 12px;
    line-height: 18px;
    text-align: center;
}

.siri {
    width: 16px;
    height: 16px;
    border-radius: 50%;
    background: conic-gradient(#e04fb0, #7a5be8, #2fb4f0, #e9e4f2, #e04fb0);
    border: 1px solid #e9e4f2;
}

/* browser window */
.window {
    display: flex;
    flex-direction: column;
    height: 803px;
    border-top: 1px solid #55565a;
    border-radius: 5px;
    background: #fff;
    overflow: hidden;
    color: #fff;
}

.tabstrip {
    display: flex;
    align-items: flex-end;
    flex: none;
    height: 41px;
    background: #202124;
}

.lights {
    display: flex;
    gap: 8px;
    align-self: flex-start;
    margin: 14px 0 0 13px;
    width: 65px;
}

.light {
    width: 12px;
    height: 12px;
    border-radius: 50%;
}

.red {
    background: #f0493f;
}

.yellow {
    background: #ffb400;
}

.green {
    background: #0fcb35;
}

.tab {
    display: flex;
    align-items: center;
    width: 240px;
    height: 34px;
    padding: 0 11px 0 12px;
    background: #35363a;
    border-radius: 8px 8px 0 0;
}

.tab-title {
    width: 175px;
    margin: -1px 9px 0 8px;
    overflow: hidden;
    font-size: 12px;
    line-height: 16px;
    white-space: nowrap;
    -webkit-mask-image: linear-gradient(90deg, #000 88%, transparent);
}

.newtab {
    margin: 0 0 10px 15px;
}

.toolbar {
    display: flex;
    align-items: center;
    flex: none;
    height: 32px;
    padding: 4px 0 0 14px;
    background: #35363a;
}

.toolbar > svg:nth-child(2),
.toolbar > svg:nth-child(3) {
    margin-left: 16px;
}

.omnibox {
    display: flex;
    align-items: center;
    width: 1211px;
    height: 28px;
    margin-left: 14px;
    padding: 0 10px 0 11px;
    background: #202124;
    border-radius: 14px;
}

.url {
    margin: -2px 0 0 9px;
    font-size: 14px;
}

.url em {
    color: #9aa0a6;
    font-style: normal;
}

.star {
    margin-left: auto;
}

.grammarly {
    width: 17px;
    height: 17px;
    margin-left: 13px;
    border-radius: 50%;
    background: #15c39a;
    font-size: 12px;
    line-height: 17px;
    text-align: center;
}

.tool-sep {
    width: 1px;
    height: 16px;
    margin-left: 14px;
    background: #5f6064;
}

.avatar {
    margin-left: 11px;
}

.kebab {
    margin-left: 20px;
}

.bookmarks {
    display: grid;
    grid-template-columns: 69px 89px 77px 153px 81.5px 154px 154px 154px 154px 154px 159px 12px;
    align-items: center;
    flex: none;
    height: 37px;
    padding-left: 13.5px;
    background: #35363a;
    font-size: 12px;
}

.bm {
    display: flex;
    align-items: center;
    gap: 8px;
    margin-top: -1px;
    white-space: nowrap;
}

.bm span {
    margin-top: -1px;
    letter-spacing: -.02px;
}

/* page */
.page {
    flex: 1;
    background: #fff;
}

.container {
    width: 1110px;
    margin: 4px auto 0;
}

.navbar {
    height: 58px;
    padding-left: 20px;
    background: #000;
    color: #fff;
    font-size: 14.6px;
    font-weight: 600;
    line-height: 60px;
}

.panel {
    display: grid;
    grid-template-columns: 565px 1fr;
    padding: 10px 0;
    background: #017082;
    border-radius: 0 0 4px 4px;
}

.draw-col {
    display: flex;
    flex-direction: column;
    gap: 10px;
    padding-left: 203px;
    width: 353px;
}

.digit-canvas {
    margin-bottom: 6px;
    background: #000;
}

.btn {
    height: 38px;
    border: 0;
    border-radius: 4px;
    background: #343a40;
    color: #fff;
    font-family: inherit;
    font-size: 15.5px;
}

.btn-focus {
    box-shadow: 0 0 0 3px rgba(82, 88, 93, .5);
}

.chart-card {
    width: 308px;
    height: 308px;
    background: #fff;
    border-radius: 4px;
}

.chart text {
    fill: #666;
    font-family: "Liberation Sans", sans-serif;
    font-size: 10.6px;
}

.result {
    margin: 10px 0 0;
    color: #212529;
    font-size: 15.25px;
    line-height: 24px;
    white-space: nowrap;
}

/* downloads */
.downloads {
    display: flex;
    align-items: center;
    flex: none;
    height: 48px;
    background: #35363a;
    border-top: 1px solid #2a2b2e;
    font-size: 12px;
}

.dl {
    display: flex;
    align-items: center;
    height: 36px;
    border-right: 1px solid #5a5b5f;
}

.dl > svg {
    margin-top: -2px;
}

.dl span {
    margin: 4px 0 0 16px;
}

.dl-first {
    width: 230px;
    padding-left: 22px;
}

.dl-second {
    width: 227px;
    padding-left: 20px;
}

.dl-second span {
    margin-left: 15px;
}

.dl-chevron {
    margin-left: auto;
    margin-right: 16px;
}

.show-all {
    width: 79px;
    height: 30px;
    margin: -2px 0 0 auto;
    border: 1px solid #2c2d30;
    border-radius: 3px;
    background: #292a2d;
    color: #fff;
    font-family: inherit;
    font-size: 12px;
}

.dl-close {
    margin: -2px 13px 0 13px;
}

/* dock */
.desktop {
    flex: 1;
    padding: 1px 0 0 51.4px;
    background: linear-gradient(90deg, #05070f, #0b1020 50%, #0d1428);
}

.dock {
    display: flex;
    width: 1337px;
    height: 73px;
    padding-left: 3.2px;
    background: #141b2e;
    border: 1px solid #262d40;
    border-bottom: 0;
    border-radius: 4px 4px 0 0;
}

.dock-item {
    position: relative;
    flex: none;
    width: 60.7px;
    padding: 8px 3.3px 0;
}

.dock-item.running::after {
    content: "";
    position: absolute;
    left: 28.500px;
    bottom: 3px;
    width: 3px;
    height: 3px;
    border-radius: 50%;
    background: #a7abb3;
}

.dock-sep {
    position: relative;
    flex: none;
    width: 28px;
}

.dock-sep::before {
    content: "";
    position: absolute;
    left: 13px;
    top: 9px;
    width: 1px;
    height: 53px;
    background: #3e4557;
}

.badge {
    position: absolute;
    top: 7px;
    right: 1px;
    width: 19px;
    height: 19px;
    border-radius: 10px;
    background: #e8100c;
    color: #fff;
    font-size: 12px;
    line-height: 19px;
    text-align: center;
}

.badge-wide {
    right: 0;
    width: 26px;
    font-size: 11.5px;
}

.petals ellipse {
    mix-blend-mode: multiply;
}

.maps-3d {
    fill: #55585b;
    font-size: 7.5px;
    font-weight: 600;
}

.cal-month {
    fill: #fff;
    font-size: 7.5px;
}

.cal-day {
    fill: #222;
    font-size: 26px;
    font-weight: 300;
}

.term {
    fill: #fff;
    font-family: "Liberation Mono", monospace;
    font-size: 13px;
    font-weight: 700;
}

.pages-label {
    fill: #fff;
    font-size: 6px;
}
```
